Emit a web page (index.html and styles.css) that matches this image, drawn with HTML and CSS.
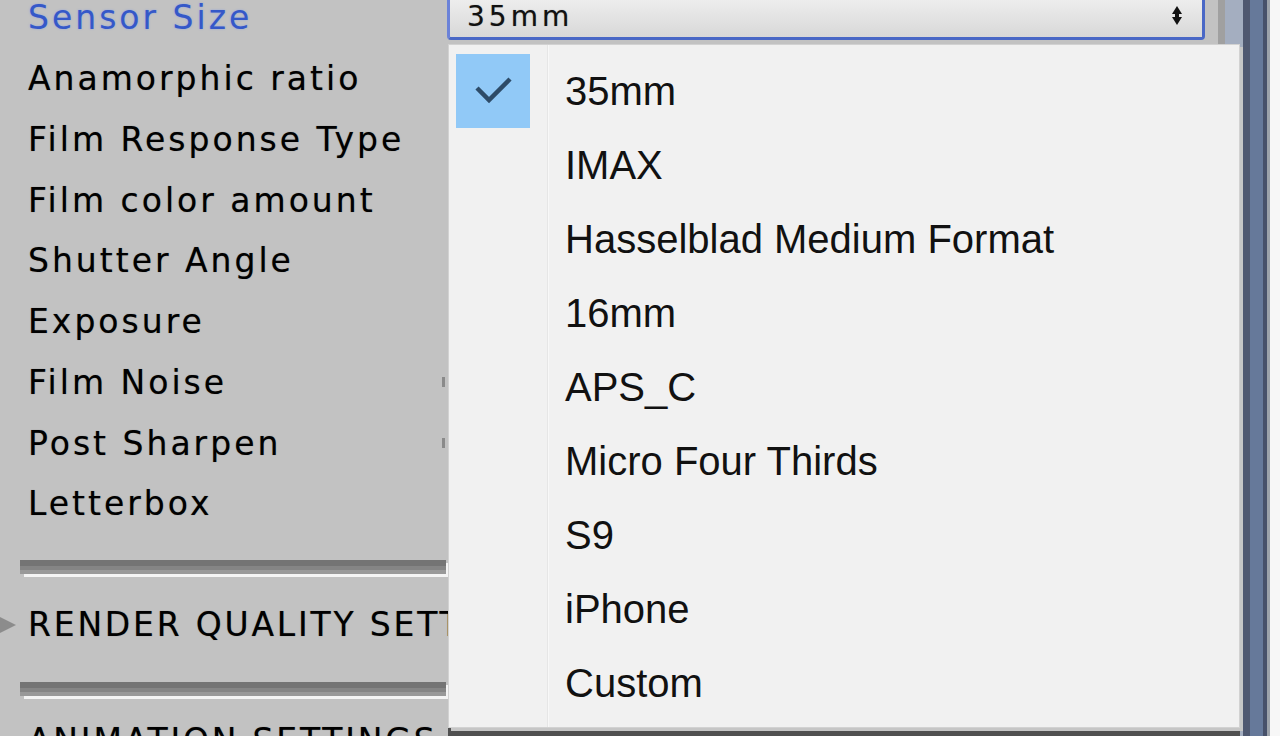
FILE: index.html
```html
<!DOCTYPE html>
<html lang="en">
<head>
  <meta charset="UTF-8">
  <title>Camera Settings</title>
  <link rel="stylesheet" href="styles.css">
</head>
<body>
  <div class="window">
    <div class="inspector">
      <!-- camera properties -->
      <div class="props">
        <div class="row">
          <span class="label active">Sensor Size</span>
          <div class="field">
            <span>35mm</span>
            <svg class="arrows" width="12" height="20" viewBox="0 0 12 20">
              <path d="M6 0 L11 8 L1 8 Z M1 11 L11 11 L6 19 Z" fill="#111"/>
              <rect x="4" y="6" width="4" height="8" fill="#111"/>
            </svg>
          </div>
        </div>
        <div class="row"><span class="label">Anamorphic ratio</span></div>
        <div class="row"><span class="label">Film Response Type</span></div>
        <div class="row"><span class="label">Film color amount</span></div>
        <div class="row"><span class="label">Shutter Angle</span></div>
        <div class="row"><span class="label">Exposure</span></div>
        <div class="row"><span class="label">Film Noise</span><span class="tick"></span></div>
        <div class="row"><span class="label">Post Sharpen</span><span class="tick"></span></div>
        <div class="row"><span class="label">Letterbox</span></div>
      </div>

      <div class="sep"></div>
      <div class="section"><span class="foldout"></span>RENDER QUALITY SETTINGS</div>
      <div class="sep second"></div>
      <div class="section last">ANIMATION SETTINGS</div>
    </div>
    <div class="divider"></div>
    <div class="scrollbar"></div>
    <div class="edge"></div>
  </div>

  <!-- open dropdown menu -->
  <div class="menu">
    <div class="item">
      <span class="check selected">
        <svg width="74" height="74" viewBox="0 0 74 74">
          <path d="M21 34 L33 46 L54 25" fill="none" stroke="#2d4b68" stroke-width="4.5"/>
        </svg>
      </span>
      <span class="text">35mm</span>
    </div>
    <div class="item"><span class="check"></span><span class="text">IMAX</span></div>
    <div class="item"><span class="check"></span><span class="text">Hasselblad Medium Format</span></div>
    <div class="item"><span class="check"></span><span class="text">16mm</span></div>
    <div class="item"><span class="check"></span><span class="text">APS_C</span></div>
    <div class="item"><span class="check"></span><span class="text">Micro Four Thirds</span></div>
    <div class="item"><span class="check"></span><span class="text">S9</span></div>
    <div class="item"><span class="check"></span><span class="text">iPhone</span></div>
    <div class="item"><span class="check"></span><span class="text">Custom</span></div>
  </div>
</body>
</html>
```

FILE: styles.css
```css
body {
  margin: 0;
  width: 1280px;
  height: 736px;
  overflow: hidden;
  background-color: #c2c2c2;
  font-family: "DejaVu Sans", sans-serif;
}

.window {
  display: flex;
  height: 736px;
}

.inspector {
  width: 1218px;
  flex: none;
  overflow: hidden;
  background-color: #c2c2c2;
}

.props {
  margin-top: -12.4px;
  padding-left: 28px;
}

.row {
  display: flex;
  align-items: center;
  height: 60.75px;
}

.label {
  width: 414px;
  flex: none;
  font-size: 33px;
  letter-spacing: 3px;
  color: #000;
  white-space: nowrap;
  text-shadow: 0 0 1px rgba(0, 0, 0, 0.4);
}
.label.active {
  color: #3558c8;
  text-shadow: 0 0 2px rgba(90, 130, 255, 0.5);
}

.field {
  width: 758px;
  height: 49px;
  margin-left: 5px;
  align-self: flex-start;
  margin-top: 3px;
  box-sizing: border-box;
  display: flex;
  align-items: center;
  justify-content: space-between;
  padding: 5px 19px 0 17px;
  border: 3px solid #4a68c6;
  border-top: none;
  border-left-color: #6b82d8;
  border-radius: 0 0 4px 4px;
  background: linear-gradient(#f2f2f2, #d8d8d8);
  font-size: 28px;
  letter-spacing: 4px;
  color: #111;
  text-shadow: 0 0 1px rgba(0, 0, 0, 0.4);
}

.tick {
  width: 3px;
  height: 10px;
  background-color: #8a8a8a;
}

.sep {
  width: 426px;
  height: 14px;
  margin: 25.6px 0 0 20px;
  background: linear-gradient(#747474 0 6px, #858585 6px 10px, #999 10px);
  box-shadow: 4px 3px 0 #f4f4f4;
}
.sep.second {
  margin-top: 9px;
}

.section {
  display: flex;
  align-items: center;
  height: 96px;
  margin-top: 3px;
  padding-left: 28px;
  font-size: 33px;
  letter-spacing: 2.8px;
  color: #000;
  white-space: nowrap;
  text-shadow: 0 0 1px rgba(0, 0, 0, 0.4);
}
.section.last {
  height: 84px;
}

.foldout {
  width: 0;
  height: 0;
  margin-left: -28px;
  margin-right: 12px;
  border-left: 16px solid #8c8c8c;
  border-top: 8px solid transparent;
  border-bottom: 8px solid transparent;
}

.divider {
  width: 7px;
  background-color: #a0a0a0;
}
.scrollbar {
  width: 45px;
  background: linear-gradient(90deg, #a4aec0 0 18px, #4f5870 18px 25px, #66799a 25px 38px, #47516a 38px 42px, #9ca2aa 42px);
}
.edge {
  flex: 1;
  background-color: #f7f7f7;
}

.menu {
  position: absolute;
  left: 448px;
  top: 44px;
  width: 792px;
  height: 684px;
  box-sizing: border-box;
  padding-top: 9px;
  border: 1px solid #d2d2d2;
  background: linear-gradient(90deg, transparent 98px, #e6e6e6 98px 99px, #f8f8f8 99px 100px, transparent 100px), #f1f1f1;
  box-shadow: 3px 3px 0 #c6c6c6, 0 8px 0 #505050;
  font-family: "Liberation Sans", Arial, sans-serif;
}

.item {
  display: flex;
  align-items: center;
  height: 74.1px;
}

.check {
  width: 74px;
  height: 74px;
  margin-left: 7px;
  flex: none;
}
.check.selected {
  background-color: #91c9f7;
}
.check svg {
  display: block;
}

.text {
  margin-left: 35px;
  font-size: 40px;
  color: #111;
}
```
